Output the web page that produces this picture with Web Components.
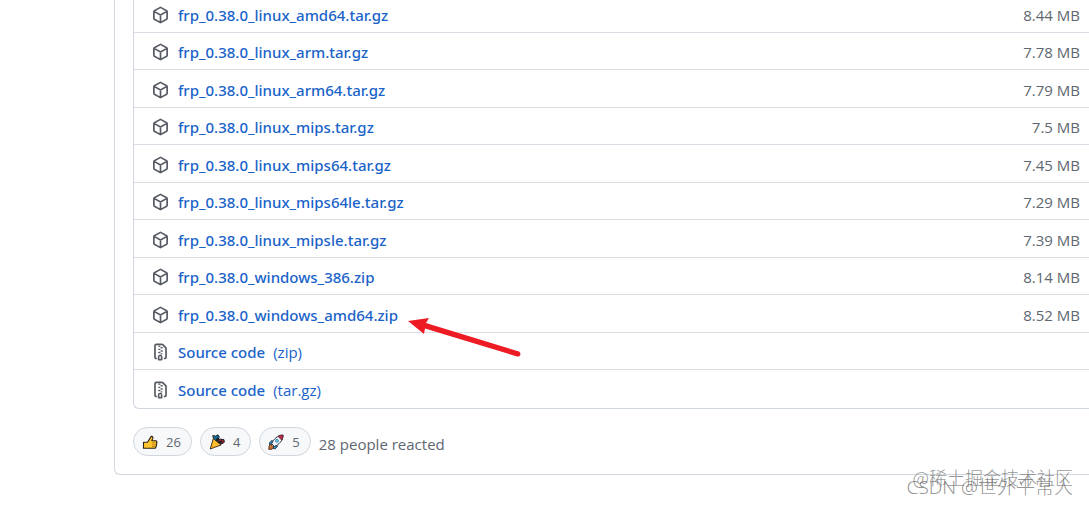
<!DOCTYPE html>
<html lang="en">
<head>
<meta charset="utf-8">
<title>frp release assets</title>
<style>
  body { margin: 0; background: #fff; color: #606770; font: 15px/24px "Open Sans", "Noto Sans", sans-serif; overflow: hidden; }
</style>
</head>
<body>
<release-card>
  <asset-list>
    <asset-row name="frp_0.38.0_linux_amd64.tar.gz" size="8.44 MB"></asset-row>
    <asset-row name="frp_0.38.0_linux_arm.tar.gz" size="7.78 MB"></asset-row>
    <asset-row name="frp_0.38.0_linux_arm64.tar.gz" size="7.79 MB"></asset-row>
    <asset-row name="frp_0.38.0_linux_mips.tar.gz" size="7.5 MB"></asset-row>
    <asset-row name="frp_0.38.0_linux_mips64.tar.gz" size="7.45 MB"></asset-row>
    <asset-row name="frp_0.38.0_linux_mips64le.tar.gz" size="7.29 MB"></asset-row>
    <asset-row name="frp_0.38.0_linux_mipsle.tar.gz" size="7.39 MB"></asset-row>
    <asset-row name="frp_0.38.0_windows_386.zip" size="8.14 MB"></asset-row>
    <asset-row name="frp_0.38.0_windows_amd64.zip" size="8.52 MB"></asset-row>
    <asset-row name="Source code" kind="zip"></asset-row>
    <asset-row name="Source code" kind="tar.gz"></asset-row>
  </asset-list>
  <reaction-bar slot="footer">
    <reaction-pill label="thumbs up" count="26"><svg viewBox="0 0 16 16"><path d="M1.5 8.2h4L9.2 2.4c1.4-.3 2 .7 1.6 2L9.8 6.8h3.8c1.6 0 1.7 1.6.8 2 .7.7.5 1.7-.2 2 .5.7.3 1.6-.4 1.9.2 1-.3 1.6-1.4 1.6H1.5z" fill="#ffc52e" stroke="#2b2117" stroke-width="1.1" stroke-linejoin="round"/><path d="M10 8.9h3.6M10 10.9h3.5M10 12.6h3" stroke="#a96a13" fill="none" stroke-width=".7"/></svg></reaction-pill>
    <reaction-pill label="hooray" count="4"><svg viewBox="0 0 16 16"><path d="m3.8 1.6 2.9.5L9 .8l1.2 2L9.4 6 7.2 7.2 4.6 5z" fill="#176f9c" stroke="#202832"/><path d="m9.3 6.3 2.2-1.2 3.5.6.3 2.5-2.4 1.7-2.7-.3-1.7-1.8z" fill="#9c2634" stroke="#221e26"/><path d="m7 7 2.3-3.2M9 8.4l4-.9" stroke="#1b2025" stroke-width="2"/><path d="M4.3 4.6 1.2 15 12 11z" fill="#ffbf2e" stroke="#30251a" stroke-width=".9" stroke-linejoin="round"/><path d="m2.8 12 1.6 1.4" stroke="#dc7f18" stroke-width="1.2"/></svg></reaction-pill>
    <reaction-pill label="rocket" count="5"><svg viewBox="0 0 16 16"><path d="M4.1 6.2 1.5 8.8l.1 2.3 3-.6zM9.7 11.9l-2.5 3-2-.4.4-3z" fill="#2e91c9" stroke="#243b4c" stroke-width=".9"/><path d="m2.5 10.2 3.1 3-1.5 2L.8 15.4l.2-3.1z" fill="#c8702a" stroke="#553322" stroke-width=".9"/><path d="M3.7 9.7C5.5 5.2 9.4 1.3 15 1.1c.1 5.7-4.2 9.5-8.5 11.4z" fill="#edf5fa" stroke="#29343f"/><path d="M10 2.3c1.5-.9 3.2-1.2 5-1.2.1 1.9-.4 3.7-1.2 5.1z" fill="#c62949" stroke="#472436" stroke-width=".8"/><circle cx="9" cy="6.8" r="1.5" fill="#72c6e8" stroke="#2b7092" stroke-width=".7"/></svg></reaction-pill>
    <span>28 people reacted</span>
  </reaction-bar>
</release-card>
<pointer-arrow></pointer-arrow>
<water-mark></water-mark>

<script>
const define = (name, html, setup) => {
  const template = document.createElement('template');
  template.innerHTML = html;
  customElements.define(name, class extends HTMLElement {
    connectedCallback() {
      if (this.shadowRoot) return;
      const root = this.attachShadow({ mode: 'open' });
      root.append(template.content.cloneNode(true));
      if (setup) setup(this, root);
    }
  });
};

define('release-card', `
<style>
  :host { display: block; box-sizing: border-box; margin-left: 114px; padding: 0 0 18px 18px; border: solid #d0d7de; border-width: 0 0 1px 1px; border-bottom-left-radius: 6px; }
</style>
<slot></slot><slot name="footer"></slot>`);

/* The list is scrolled a little past its first row's top edge. */
define('asset-list', `
<style>
  :host { display: block; margin-top: -5px; border: solid #d0d7de; border-width: 0 0 1px 1px; border-bottom-left-radius: 6px; }
  ::slotted(*) { min-height: 38px; border-bottom: 1px solid #d8dee4; }
  ::slotted(:nth-child(even)) { min-height: 37px; }
  ::slotted(:last-child) { border-bottom: 0; }
</style>
<slot></slot>`);

const cube = '<path d="M7.5 1.05a1 1 0 0 1 1 0l5.25 3.03a1 1 0 0 1 .5.87v6.1a1 1 0 0 1-.5.87L8.5 14.95a1 1 0 0 1-1 0l-5.25-3.03a1 1 0 0 1-.5-.87v-6.1a1 1 0 0 1 .5-.87zM2 4.6l6 3.45 6-3.45M8 8v7" fill="none" stroke="#575c64" stroke-width="1.6"/>';
const zip = '<path d="M3.9 14a1.1 1.1 0 0 1-1.1-1.1V2A1.2 1.2 0 0 1 4 .8h5.4a1 1 0 0 1 .7.3l2.8 2.8a1 1 0 0 1 .3.7v8.3a1.2 1.2 0 0 1-1.4 1.2" fill="none" stroke="#575c64" stroke-width="1.6" stroke-linecap="round"/><path d="M6.4 2.5h1M8.6 4h1M6.4 5.5h1M8.6 7h1M6.4 8.5h1M8.6 9.8h.6" fill="none" stroke="#575c64" stroke-width="1.3" stroke-linecap="round"/><path d="M6.2 15.2v-2.6a1.3 1.3 0 0 1 1.3-1.3h.3a1.3 1.3 0 0 1 1.3 1.3v2.6z" fill="none" stroke="#575c64" stroke-width="1.5" stroke-linejoin="round"/>';

define('asset-row', `
<style>
  :host { display: flex; align-items: center; box-sizing: border-box; padding: 2px 9px 0 18px; }
  svg { width: 17px; height: 18px; margin-right: 9px; flex: none; }
  a { color: #1a63c9; text-decoration: none; white-space: nowrap; }
  .name { font-family: "Noto Sans", "Open Sans", sans-serif; font-weight: 500; }
  .kind { margin-left: 8px; }
  .size { margin-left: auto; white-space: nowrap; }
</style>
<svg viewBox="0 0 16 16" aria-hidden="true"></svg><a href="#"><span class="name"></span></a><span class="size"></span>`,
(host, root) => {
  const kind = host.getAttribute('kind');
  root.querySelector('svg').innerHTML = kind ? zip : cube;
  root.querySelector('.name').textContent = host.getAttribute('name');
  if (kind) {
    const label = document.createElement('span');
    label.className = 'kind';
    label.textContent = '(' + kind + ')';
    root.querySelector('a').append(label);
    root.querySelector('.size').remove();
  } else {
    root.querySelector('.size').textContent = host.getAttribute('size');
  }
});

define('reaction-bar', `
<style>
  :host { display: flex; align-items: center; gap: 8px; margin-top: 18px; }
  ::slotted(span) { padding-top: 4px; }
</style>
<slot></slot>`);

define('reaction-pill', `
<style>
  :host { display: block; }
  button { display: flex; align-items: center; gap: 8px; height: 29px; padding: 0 10px 0 8px; border: 1px solid #d0d7de; border-radius: 15px; background: #f6f8fa; color: #606770; font: 13px/20px "Open Sans", "Noto Sans", sans-serif; }
  ::slotted(svg) { display: block; width: 16px; height: 16px; }
</style>
<button type="button"><slot></slot><span></span></button>`,
(host, root) => {
  root.querySelector('span').textContent = host.getAttribute('count');
  root.querySelector('button').setAttribute('aria-label', host.getAttribute('label') + ' ' + host.getAttribute('count'));
});

define('pointer-arrow', `
<style>
  :host { position: absolute; left: 408px; top: 316px; pointer-events: none; }
  svg { display: block; width: 114px; height: 42px; }
</style>
<svg viewBox="0 0 114 42" aria-hidden="true"><path d="M0 5 21 2 18 7 111 35.5Q114 38 111 40.5L109 40.5 17 12.5 16 18Z" fill="#ed1c24"/></svg>`);

define('water-mark', `
<style>
  :host { position: absolute; right: 16px; bottom: 8px; display: grid; justify-items: end; color: rgba(90, 90, 90, .65); font: 300 18px/19px "Noto Sans CJK SC", sans-serif; white-space: nowrap; pointer-events: none; }
  .second { margin-top: -9px; font-family: "Noto Sans", "Noto Sans CJK SC", sans-serif; font-size: 19px; }
</style>
<span>@稀土掘金技术社区</span><span class="second">CSDN @世外平常人</span>`);
</script>
</body>
</html>
